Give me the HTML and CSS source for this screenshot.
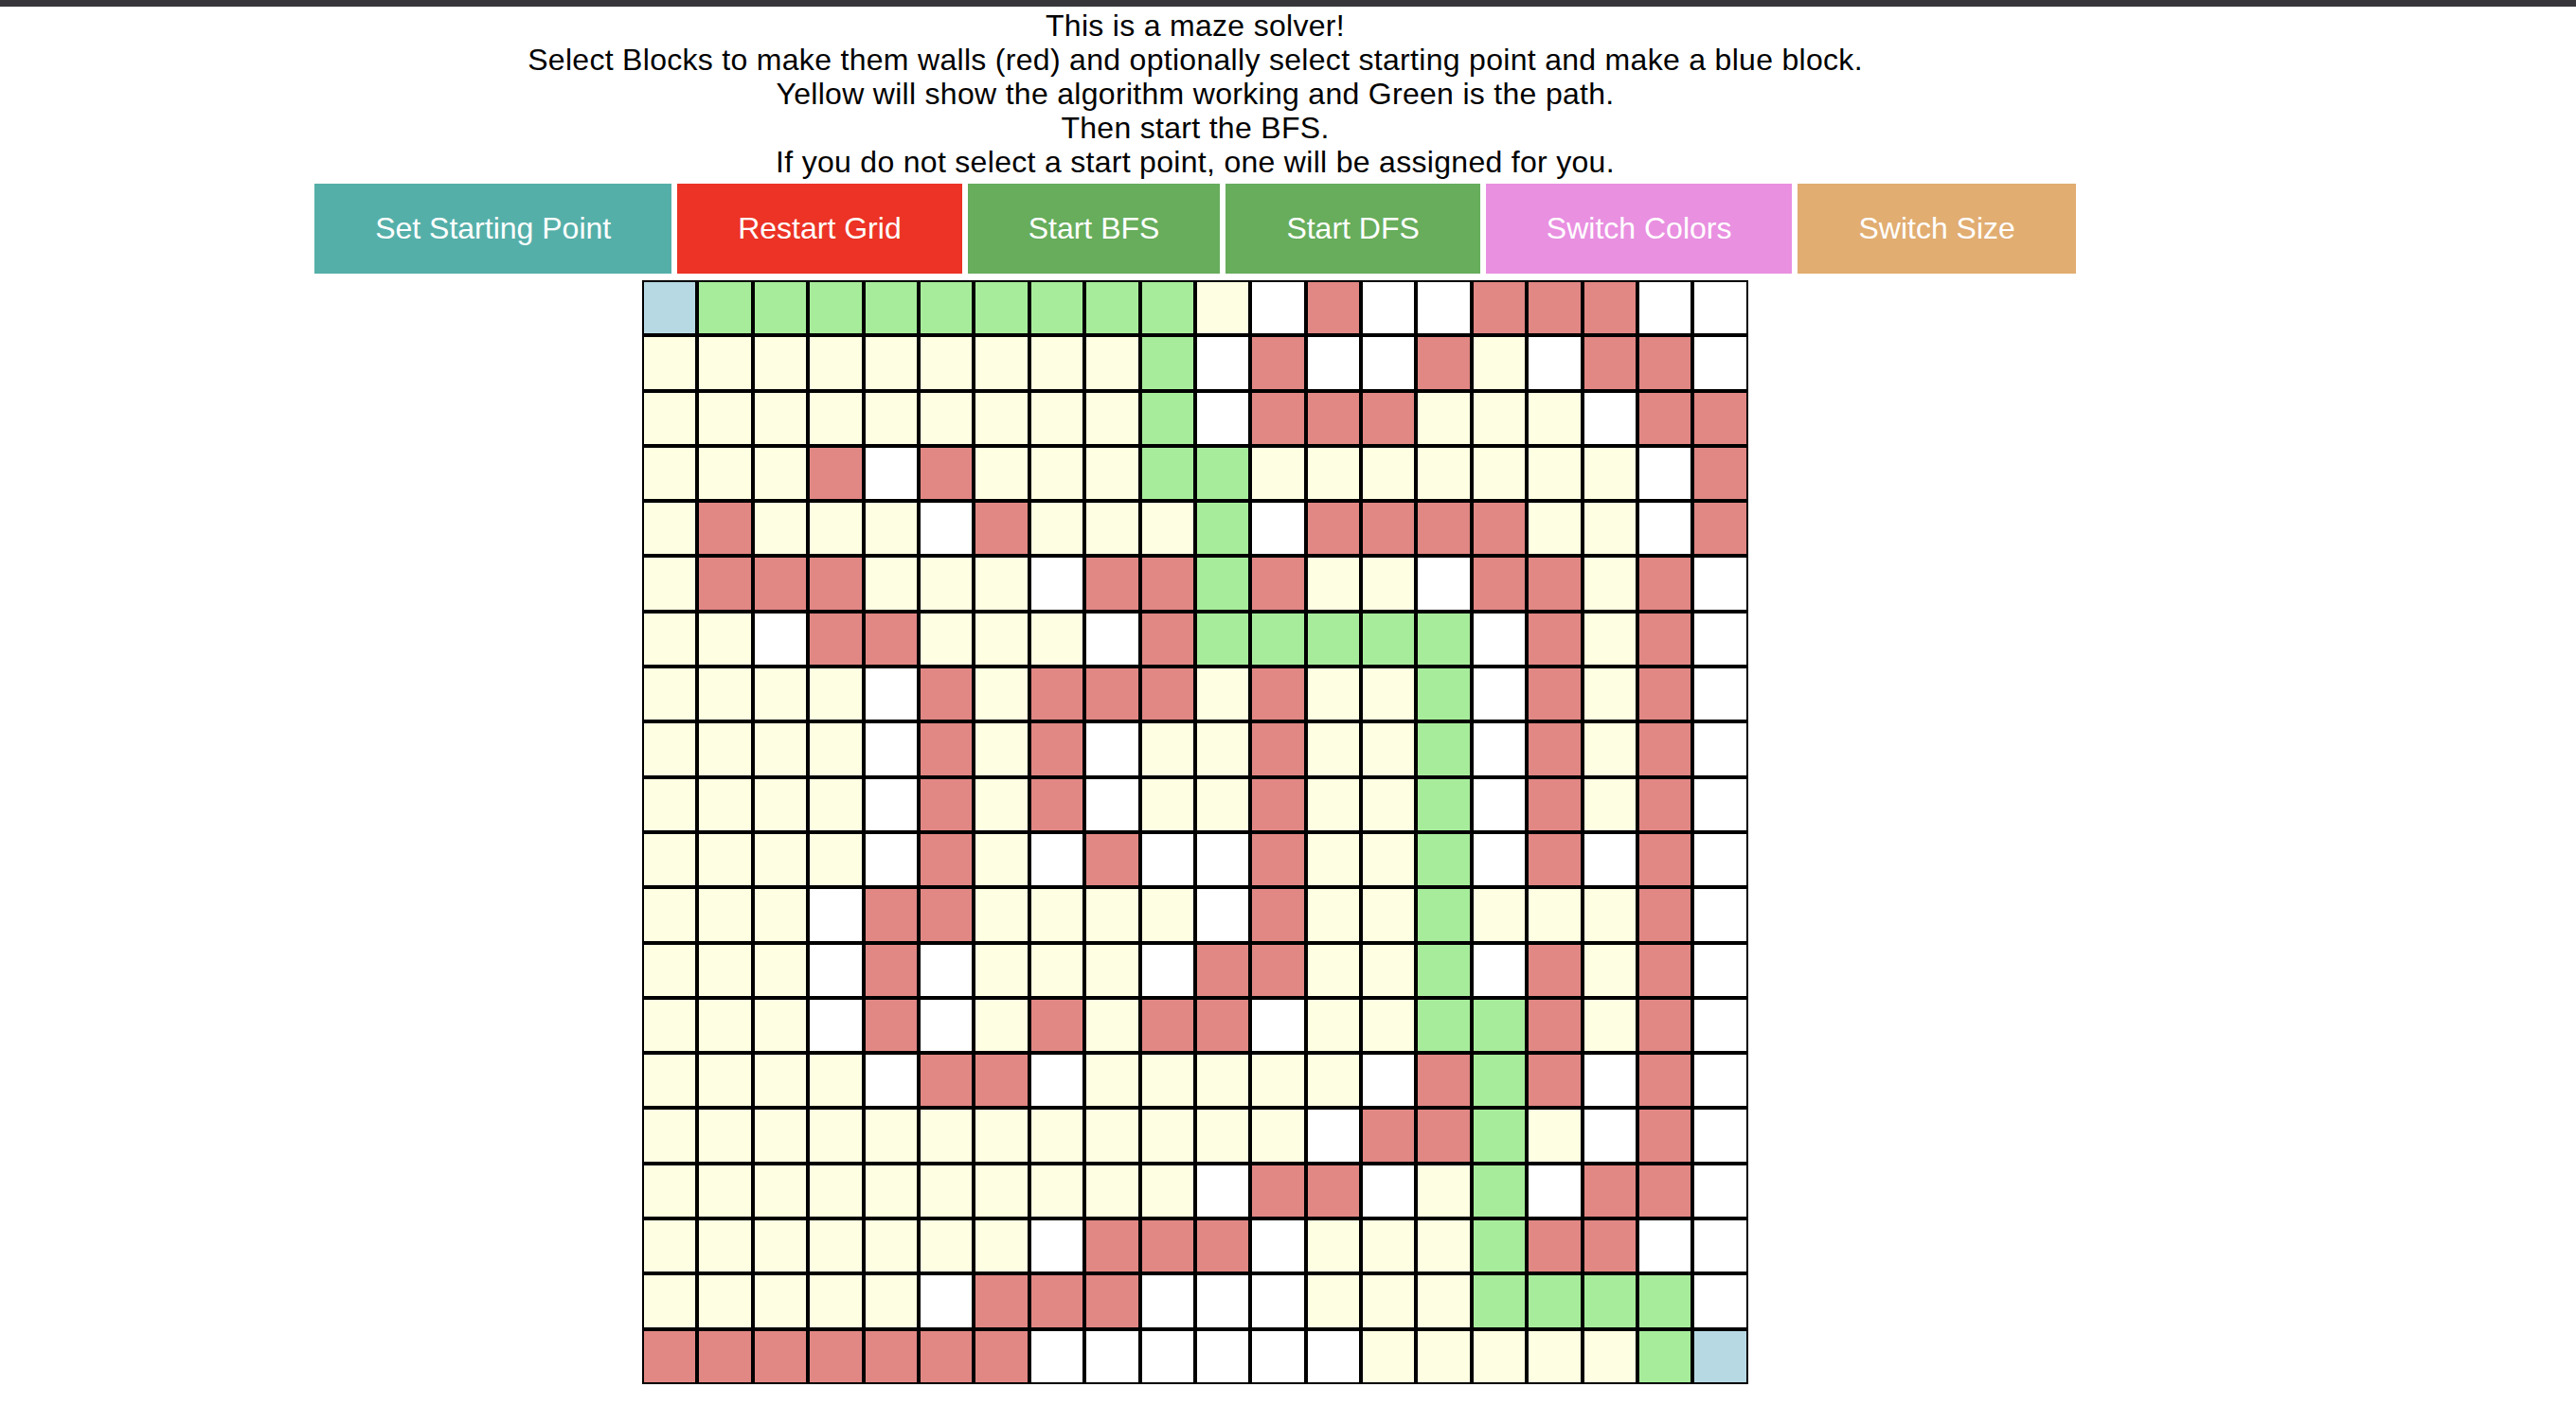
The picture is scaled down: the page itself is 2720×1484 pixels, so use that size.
FILE: index.html
```html
<!DOCTYPE html>
<html lang="en">
<head>
<meta charset="utf-8">
<title>Maze Solver</title>
<link rel="stylesheet" href="styles.css">
</head>
<body>
<div class="topbar"></div>
<div class="app">
  <div class="intro">
    <div>This is a maze solver!</div>
    <div>Select Blocks to make them walls (red) and optionally select starting point and make a blue block.</div>
    <div>Yellow will show the algorithm working and Green is the path.</div>
    <div>Then start the BFS.</div>
    <div>If you do not select a start point, one will be assigned for you.</div>
  </div>
  <div class="controls">
    <button class="btn btn-teal">Set Starting Point</button>
    <button class="btn btn-red">Restart Grid</button>
    <button class="btn btn-green">Start BFS</button>
    <button class="btn btn-green">Start DFS</button>
    <button class="btn btn-pink">Switch Colors</button>
    <button class="btn btn-orange">Switch Size</button>
  </div>
  <div class="grid">
    <div class="cell s"></div><div class="cell p"></div><div class="cell p"></div><div class="cell p"></div><div class="cell p"></div><div class="cell p"></div><div class="cell p"></div><div class="cell p"></div><div class="cell p"></div><div class="cell p"></div><div class="cell v"></div><div class="cell e"></div><div class="cell w"></div><div class="cell e"></div><div class="cell e"></div><div class="cell w"></div><div class="cell w"></div><div class="cell w"></div><div class="cell e"></div><div class="cell e"></div>
    <div class="cell v"></div><div class="cell v"></div><div class="cell v"></div><div class="cell v"></div><div class="cell v"></div><div class="cell v"></div><div class="cell v"></div><div class="cell v"></div><div class="cell v"></div><div class="cell p"></div><div class="cell e"></div><div class="cell w"></div><div class="cell e"></div><div class="cell e"></div><div class="cell w"></div><div class="cell v"></div><div class="cell e"></div><div class="cell w"></div><div class="cell w"></div><div class="cell e"></div>
    <div class="cell v"></div><div class="cell v"></div><div class="cell v"></div><div class="cell v"></div><div class="cell v"></div><div class="cell v"></div><div class="cell v"></div><div class="cell v"></div><div class="cell v"></div><div class="cell p"></div><div class="cell e"></div><div class="cell w"></div><div class="cell w"></div><div class="cell w"></div><div class="cell v"></div><div class="cell v"></div><div class="cell v"></div><div class="cell e"></div><div class="cell w"></div><div class="cell w"></div>
    <div class="cell v"></div><div class="cell v"></div><div class="cell v"></div><div class="cell w"></div><div class="cell e"></div><div class="cell w"></div><div class="cell v"></div><div class="cell v"></div><div class="cell v"></div><div class="cell p"></div><div class="cell p"></div><div class="cell v"></div><div class="cell v"></div><div class="cell v"></div><div class="cell v"></div><div class="cell v"></div><div class="cell v"></div><div class="cell v"></div><div class="cell e"></div><div class="cell w"></div>
    <div class="cell v"></div><div class="cell w"></div><div class="cell v"></div><div class="cell v"></div><div class="cell v"></div><div class="cell e"></div><div class="cell w"></div><div class="cell v"></div><div class="cell v"></div><div class="cell v"></div><div class="cell p"></div><div class="cell e"></div><div class="cell w"></div><div class="cell w"></div><div class="cell w"></div><div class="cell w"></div><div class="cell v"></div><div class="cell v"></div><div class="cell e"></div><div class="cell w"></div>
    <div class="cell v"></div><div class="cell w"></div><div class="cell w"></div><div class="cell w"></div><div class="cell v"></div><div class="cell v"></div><div class="cell v"></div><div class="cell e"></div><div class="cell w"></div><div class="cell w"></div><div class="cell p"></div><div class="cell w"></div><div class="cell v"></div><div class="cell v"></div><div class="cell e"></div><div class="cell w"></div><div class="cell w"></div><div class="cell v"></div><div class="cell w"></div><div class="cell e"></div>
    <div class="cell v"></div><div class="cell v"></div><div class="cell e"></div><div class="cell w"></div><div class="cell w"></div><div class="cell v"></div><div class="cell v"></div><div class="cell v"></div><div class="cell e"></div><div class="cell w"></div><div class="cell p"></div><div class="cell p"></div><div class="cell p"></div><div class="cell p"></div><div class="cell p"></div><div class="cell e"></div><div class="cell w"></div><div class="cell v"></div><div class="cell w"></div><div class="cell e"></div>
    <div class="cell v"></div><div class="cell v"></div><div class="cell v"></div><div class="cell v"></div><div class="cell e"></div><div class="cell w"></div><div class="cell v"></div><div class="cell w"></div><div class="cell w"></div><div class="cell w"></div><div class="cell v"></div><div class="cell w"></div><div class="cell v"></div><div class="cell v"></div><div class="cell p"></div><div class="cell e"></div><div class="cell w"></div><div class="cell v"></div><div class="cell w"></div><div class="cell e"></div>
    <div class="cell v"></div><div class="cell v"></div><div class="cell v"></div><div class="cell v"></div><div class="cell e"></div><div class="cell w"></div><div class="cell v"></div><div class="cell w"></div><div class="cell e"></div><div class="cell v"></div><div class="cell v"></div><div class="cell w"></div><div class="cell v"></div><div class="cell v"></div><div class="cell p"></div><div class="cell e"></div><div class="cell w"></div><div class="cell v"></div><div class="cell w"></div><div class="cell e"></div>
    <div class="cell v"></div><div class="cell v"></div><div class="cell v"></div><div class="cell v"></div><div class="cell e"></div><div class="cell w"></div><div class="cell v"></div><div class="cell w"></div><div class="cell e"></div><div class="cell v"></div><div class="cell v"></div><div class="cell w"></div><div class="cell v"></div><div class="cell v"></div><div class="cell p"></div><div class="cell e"></div><div class="cell w"></div><div class="cell v"></div><div class="cell w"></div><div class="cell e"></div>
    <div class="cell v"></div><div class="cell v"></div><div class="cell v"></div><div class="cell v"></div><div class="cell e"></div><div class="cell w"></div><div class="cell v"></div><div class="cell e"></div><div class="cell w"></div><div class="cell e"></div><div class="cell e"></div><div class="cell w"></div><div class="cell v"></div><div class="cell v"></div><div class="cell p"></div><div class="cell e"></div><div class="cell w"></div><div class="cell e"></div><div class="cell w"></div><div class="cell e"></div>
    <div class="cell v"></div><div class="cell v"></div><div class="cell v"></div><div class="cell e"></div><div class="cell w"></div><div class="cell w"></div><div class="cell v"></div><div class="cell v"></div><div class="cell v"></div><div class="cell v"></div><div class="cell e"></div><div class="cell w"></div><div class="cell v"></div><div class="cell v"></div><div class="cell p"></div><div class="cell v"></div><div class="cell v"></div><div class="cell v"></div><div class="cell w"></div><div class="cell e"></div>
    <div class="cell v"></div><div class="cell v"></div><div class="cell v"></div><div class="cell e"></div><div class="cell w"></div><div class="cell e"></div><div class="cell v"></div><div class="cell v"></div><div class="cell v"></div><div class="cell e"></div><div class="cell w"></div><div class="cell w"></div><div class="cell v"></div><div class="cell v"></div><div class="cell p"></div><div class="cell e"></div><div class="cell w"></div><div class="cell v"></div><div class="cell w"></div><div class="cell e"></div>
    <div class="cell v"></div><div class="cell v"></div><div class="cell v"></div><div class="cell e"></div><div class="cell w"></div><div class="cell e"></div><div class="cell v"></div><div class="cell w"></div><div class="cell v"></div><div class="cell w"></div><div class="cell w"></div><div class="cell e"></div><div class="cell v"></div><div class="cell v"></div><div class="cell p"></div><div class="cell p"></div><div class="cell w"></div><div class="cell v"></div><div class="cell w"></div><div class="cell e"></div>
    <div class="cell v"></div><div class="cell v"></div><div class="cell v"></div><div class="cell v"></div><div class="cell e"></div><div class="cell w"></div><div class="cell w"></div><div class="cell e"></div><div class="cell v"></div><div class="cell v"></div><div class="cell v"></div><div class="cell v"></div><div class="cell v"></div><div class="cell e"></div><div class="cell w"></div><div class="cell p"></div><div class="cell w"></div><div class="cell e"></div><div class="cell w"></div><div class="cell e"></div>
    <div class="cell v"></div><div class="cell v"></div><div class="cell v"></div><div class="cell v"></div><div class="cell v"></div><div class="cell v"></div><div class="cell v"></div><div class="cell v"></div><div class="cell v"></div><div class="cell v"></div><div class="cell v"></div><div class="cell v"></div><div class="cell e"></div><div class="cell w"></div><div class="cell w"></div><div class="cell p"></div><div class="cell v"></div><div class="cell e"></div><div class="cell w"></div><div class="cell e"></div>
    <div class="cell v"></div><div class="cell v"></div><div class="cell v"></div><div class="cell v"></div><div class="cell v"></div><div class="cell v"></div><div class="cell v"></div><div class="cell v"></div><div class="cell v"></div><div class="cell v"></div><div class="cell e"></div><div class="cell w"></div><div class="cell w"></div><div class="cell e"></div><div class="cell v"></div><div class="cell p"></div><div class="cell e"></div><div class="cell w"></div><div class="cell w"></div><div class="cell e"></div>
    <div class="cell v"></div><div class="cell v"></div><div class="cell v"></div><div class="cell v"></div><div class="cell v"></div><div class="cell v"></div><div class="cell v"></div><div class="cell e"></div><div class="cell w"></div><div class="cell w"></div><div class="cell w"></div><div class="cell e"></div><div class="cell v"></div><div class="cell v"></div><div class="cell v"></div><div class="cell p"></div><div class="cell w"></div><div class="cell w"></div><div class="cell e"></div><div class="cell e"></div>
    <div class="cell v"></div><div class="cell v"></div><div class="cell v"></div><div class="cell v"></div><div class="cell v"></div><div class="cell e"></div><div class="cell w"></div><div class="cell w"></div><div class="cell w"></div><div class="cell e"></div><div class="cell e"></div><div class="cell e"></div><div class="cell v"></div><div class="cell v"></div><div class="cell v"></div><div class="cell p"></div><div class="cell p"></div><div class="cell p"></div><div class="cell p"></div><div class="cell e"></div>
    <div class="cell w"></div><div class="cell w"></div><div class="cell w"></div><div class="cell w"></div><div class="cell w"></div><div class="cell w"></div><div class="cell w"></div><div class="cell e"></div><div class="cell e"></div><div class="cell e"></div><div class="cell e"></div><div class="cell e"></div><div class="cell e"></div><div class="cell v"></div><div class="cell v"></div><div class="cell v"></div><div class="cell v"></div><div class="cell v"></div><div class="cell p"></div><div class="cell s"></div>
  </div>
</div>
</body>
</html>
```

FILE: styles.css
```css
html, body {
  margin: 0;
  padding: 0;
  background: #ffffff;
}

body {
  font-family: "Liberation Sans", Arial, Helvetica, sans-serif;
  color: #000000;
}

.topbar {
  height: 7px;
  background: #37373b;
}

.app {
  width: 2524px;
  display: flex;
  flex-direction: column;
  align-items: center;
}

.intro {
  padding-top: 2px;
  font-size: 32px;
  line-height: 36px;
  letter-spacing: 0.3px;
  text-align: center;
}

.controls {
  display: flex;
  gap: 6px;
  margin-top: 5px;
}

.btn {
  border: none;
  margin: 0;
  padding: 30px 64px;
  font-family: "Liberation Sans", Arial, Helvetica, sans-serif;
  font-size: 32px;
  line-height: 35px;
  color: #ffffff;
  cursor: pointer;
}

.btn-teal { background: #55afa9; }
.btn-red { background: #ec3325; }
.btn-green { background: #67ad5c; }
.btn-pink { background: #e990e1; }
.btn-orange { background: #e1ad71; }

.grid {
  margin-top: 7px;
  width: 1168px;
  display: grid;
  grid-template-columns: repeat(20, 58.4px);
  grid-auto-rows: 58.3px;
}

.cell {
  box-sizing: border-box;
  border: 2px solid #000000;
}

.cell.s { background: #b7d9e4; }
.cell.p { background: #a7ec9b; }
.cell.v { background: #fefee2; }
.cell.e { background: #ffffff; }
.cell.w { background: #e18784; }
```
